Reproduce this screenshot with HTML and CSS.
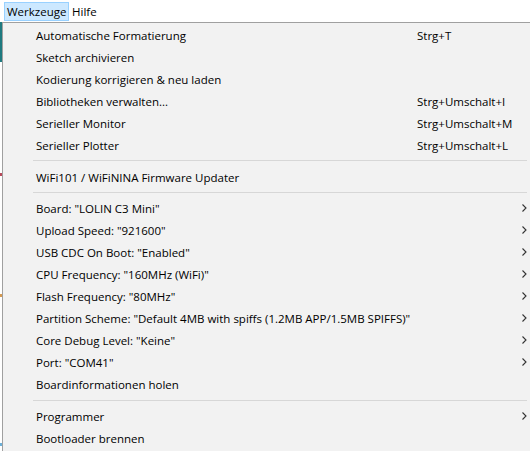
FILE: index.html
```html
<!DOCTYPE html>
<html>
<head>
<meta charset="utf-8">
<link rel="stylesheet" href="styles.css">
</head>
<body>
<div class="menubar">
  <span class="mb-item active">Werkzeuge</span>
  <span class="mb-item">Hilfe</span>
</div>
<div class="below">
  <div class="bgstrip">
    <div class="teal"></div>
    <div class="dot d1"></div>
    <div class="dot d2"></div>
    <div class="dot d3"></div>
  </div>
  <div class="menu">
    <div class="row"><span class="label">Automatische Formatierung</span><span class="key">Strg+T</span></div>
    <div class="row"><span class="label">Sketch archivieren</span></div>
    <div class="row"><span class="label">Kodierung korrigieren &amp; neu laden</span></div>
    <div class="row"><span class="label">Bibliotheken verwalten...</span><span class="key">Strg+Umschalt+I</span></div>
    <div class="row"><span class="label">Serieller Monitor</span><span class="key">Strg+Umschalt+M</span></div>
    <div class="row"><span class="label">Serieller Plotter</span><span class="key">Strg+Umschalt+L</span></div>
    <div class="sep sep1"></div>
    <div class="row"><span class="label">WiFi101 / WiFiNINA Firmware Updater</span></div>
    <div class="sep sep2"></div>
    <div class="row sub"><span class="label">Board: "LOLIN C3 Mini"</span><svg class="arrow" width="5" height="8" viewBox="0 0 5 8"><path d="M0.5 0.5 L4 4 L0.5 7.5" fill="none" stroke="#333" stroke-width="1.1"/></svg></div>
    <div class="row sub"><span class="label">Upload Speed: "921600"</span><svg class="arrow" width="5" height="8" viewBox="0 0 5 8"><path d="M0.5 0.5 L4 4 L0.5 7.5" fill="none" stroke="#333" stroke-width="1.1"/></svg></div>
    <div class="row sub"><span class="label">USB CDC On Boot: "Enabled"</span><svg class="arrow" width="5" height="8" viewBox="0 0 5 8"><path d="M0.5 0.5 L4 4 L0.5 7.5" fill="none" stroke="#333" stroke-width="1.1"/></svg></div>
    <div class="row sub"><span class="label">CPU Frequency: "160MHz (WiFi)"</span><svg class="arrow" width="5" height="8" viewBox="0 0 5 8"><path d="M0.5 0.5 L4 4 L0.5 7.5" fill="none" stroke="#333" stroke-width="1.1"/></svg></div>
    <div class="row sub"><span class="label">Flash Frequency: "80MHz"</span><svg class="arrow" width="5" height="8" viewBox="0 0 5 8"><path d="M0.5 0.5 L4 4 L0.5 7.5" fill="none" stroke="#333" stroke-width="1.1"/></svg></div>
    <div class="row sub"><span class="label">Partition Scheme: "Default 4MB with spiffs (1.2MB APP/1.5MB SPIFFS)"</span><svg class="arrow" width="5" height="8" viewBox="0 0 5 8"><path d="M0.5 0.5 L4 4 L0.5 7.5" fill="none" stroke="#333" stroke-width="1.1"/></svg></div>
    <div class="row sub"><span class="label">Core Debug Level: "Keine"</span><svg class="arrow" width="5" height="8" viewBox="0 0 5 8"><path d="M0.5 0.5 L4 4 L0.5 7.5" fill="none" stroke="#333" stroke-width="1.1"/></svg></div>
    <div class="row sub"><span class="label">Port: "COM41"</span><svg class="arrow" width="5" height="8" viewBox="0 0 5 8"><path d="M0.5 0.5 L4 4 L0.5 7.5" fill="none" stroke="#333" stroke-width="1.1"/></svg></div>
    <div class="row"><span class="label">Boardinformationen holen</span></div>
    <div class="sep sep3"></div>
    <div class="row sub"><span class="label">Programmer</span><svg class="arrow" width="5" height="8" viewBox="0 0 5 8"><path d="M0.5 0.5 L4 4 L0.5 7.5" fill="none" stroke="#333" stroke-width="1.1"/></svg></div>
    <div class="row"><span class="label">Bootloader brennen</span></div>
  </div>
</div>
</body>
</html>
```
FILE: styles.css
```css
html, body {
  margin: 0;
  padding: 0;
  width: 530px;
  height: 451px;
  overflow: hidden;
  background: #ffffff;
  font-family: "Open Sans", "Noto Sans", sans-serif;
  font-size: 11.5px;
  color: #000;
}
.menubar {
  height: 22px;
  display: flex;
  align-items: flex-start;
  padding-left: 4px;
  background: #ffffff;
  box-sizing: border-box;
}
.mb-item {
  height: 19px;
  margin-top: 2px;
  line-height: 17px;
  padding: 0 4px 0 2px;
  box-sizing: border-box;
  border: 1px solid transparent;
}
.mb-item.active {
  background: #cce8ff;
  border-color: #99d1ff;
  width: 65px;
}
.below {
  display: flex;
  height: 429px;
}
.bgstrip {
  width: 2px;
  position: relative;
  background: #ffffff;
}
.teal {
  height: 40px;
  background: #1f7a80;
}
.dot {
  position: absolute;
  left: 0;
  width: 2px;
  height: 3px;
}
.d1 { top: 151px; background: #b7495a; }
.d2 { top: 272px; background: #d59a52; }
.d3 { top: 421px; background: #6cb0d8; }
.menu {
  flex: 1;
  background: #f2f2f2;
  border-left: 1px solid #a0a0a0;
  border-top: 1px solid #a0a0a0;
  padding-top: 1px;
}
.row {
  height: 22px;
  display: flex;
  align-items: center;
  padding-left: 33px;
  padding-right: 3px;
}
.label {
  width: 381px;
  flex: none;
  white-space: nowrap;
}
.sub .label { width: auto; }
.key {
  white-space: nowrap;
}
.arrow {
  margin-left: auto;
  flex: none;
}
.sep {
  height: 1px;
  background: #d7d7d7;
  margin: 4px 3px 4px 30px;
}
.sep1 { margin-bottom: 5px; }
.sep3 { margin-top: 5px; }
```
